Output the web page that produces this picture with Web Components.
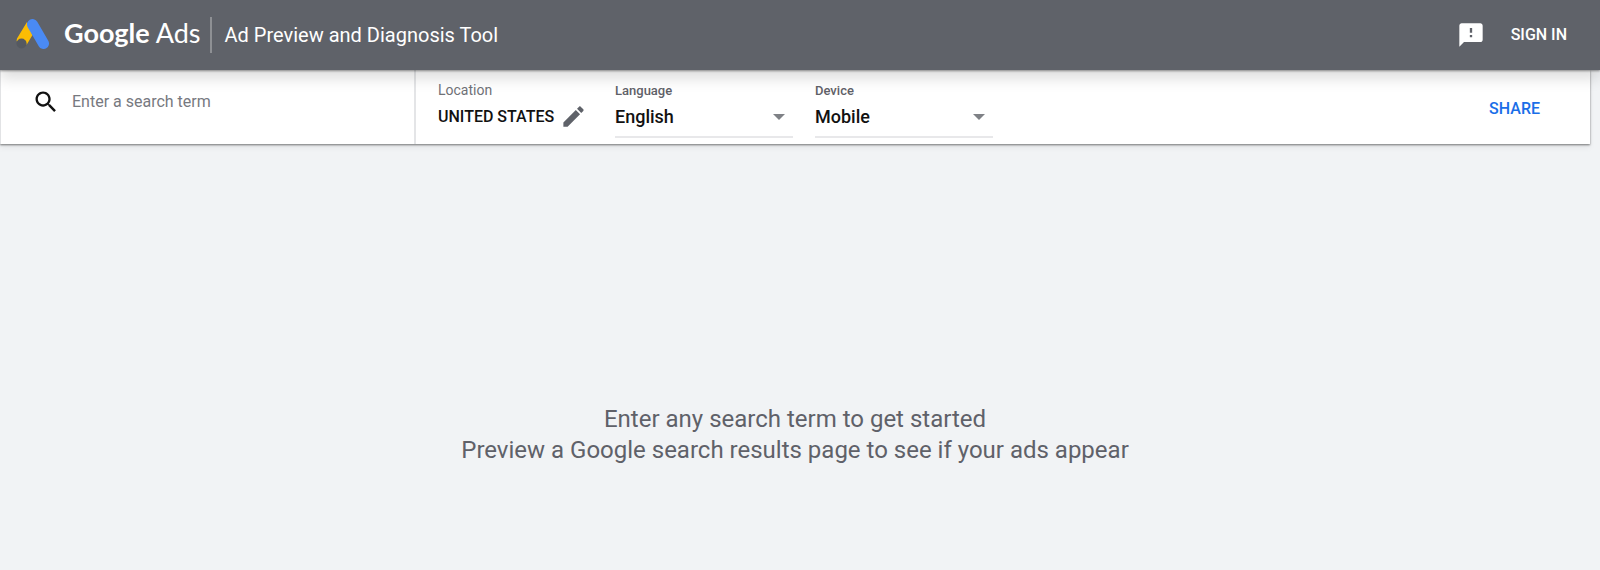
<!DOCTYPE html>
<html lang="en">
<head>
<meta charset="utf-8">
<meta name="viewport" content="width=device-width, initial-scale=1">
<title>Ad Preview and Diagnosis Tool</title>
<style>
  html { height: 100%; }
  body { margin: 0; min-height: 100%; display: flex; flex-direction: column; background: #f1f3f5; color: #5f6169; font-family: Roboto, "Liberation Sans", sans-serif; }
  preview-app { flex: 1; }
</style>
</head>
<body>
<preview-app></preview-app>
<script>
const define = (name, html, setup) => {
  const template = document.createElement('template');
  template.innerHTML = html;
  customElements.define(name, class extends HTMLElement {
    constructor() {
      super();
      this.attachShadow({ mode: 'open' }).append(template.content.cloneNode(true));
    }
    connectedCallback() { if (setup) setup(this, this.shadowRoot); }
  });
};

define('ads-logo', `
  <style>
    :host { display: flex; align-items: center; color: #fff; font: 400 27px/32px Lato, Roboto, sans-serif; gap: 14px; padding-bottom: 4px; }
    svg { display: block; width: 34px; height: 32px; }
    b { font-weight: 700; }
  </style>
  <svg viewBox="0 0 34 32" aria-hidden="true">
    <path d="M11 5 1 21.500 Q0 24 1.500 25 Q5 20.500 10 24 L10.500 28 16.500 18 Z" fill="#fbbc04"/>
    <circle cx="5.500" cy="26.500" r="5" fill="#555960"/>
    <path d="M16.500 7.500 27.500 26.500" stroke="#4a8af4" stroke-width="11" stroke-linecap="round"/>
  </svg>
  <span><b>Google</b> Ads</span>`);

define('app-header', `
  <style>
    :host { display: flex; align-items: center; box-sizing: border-box; height: 70px; padding: 0 33px 0 16px; background: #5f6269; color: #fff; position: relative; z-index: 2; box-shadow: 0 1px 2px rgba(0,0,0,.4), 0 8px 14px rgba(0,0,0,.14); }
    h1 { margin: 0 auto 0 9px; padding-left: 13px; border-left: 2px solid #8e9094; font: 400 20px/36px Roboto, sans-serif; }
    button { border: 0; padding: 0; background: none; color: inherit; font: 500 16px/24px Roboto, sans-serif; cursor: pointer; }
    svg { display: block; width: 28px; height: 28px; }
    .feedback { margin-right: 26px; }
  </style>
  <ads-logo></ads-logo>
  <h1>Ad Preview and Diagnosis Tool</h1>
  <button class="feedback" aria-label="Send feedback"><svg viewBox="0 0 24 24" fill="#fff" aria-hidden="true"><path d="M20 2H4c-1.100 0-1.990.9-1.990 2L2 22l4-4h14c1.100 0 2-.9 2-2V4c0-1.100-.9-2-2-2zm-7 12h-2v-2h2v2zm0-4h-2V6h2v4z"/></svg></button>
  <button>SIGN IN</button>`);

define('search-box', `
  <style>
    :host { display: flex; align-items: center; gap: 12px; box-sizing: border-box; padding: 0 20px 10px 31px; }
    label { display: block; }
    svg { display: block; width: 28px; height: 28px; }
    input { flex: 1; min-width: 0; border: 0; padding: 0; outline: 0; background: none; color: #111; font: 400 16px/24px Roboto, sans-serif; }
    input::placeholder { color: #77797f; opacity: 1; }
  </style>
  <label for="term" aria-label="Search term"><svg viewBox="0 0 24 24" fill="#111" aria-hidden="true"><path d="M15.500 14h-.79l-.28-.27C15.410 12.590 16 11.110 16 9.500 16 5.910 13.090 3 9.500 3S3 5.910 3 9.500 5.910 16 9.500 16c1.610 0 3.090-.59 4.230-1.570l.27.28v.79l5 4.990L20.490 19l-4.990-5zm-6 0C7.010 14 5 11.990 5 9.500S7.010 5 9.500 5 14 7.010 14 9.500 11.990 14 9.500 14z"/></svg></label>
  <input id="term" type="text" placeholder="Enter a search term">`);

define('location-field', `
  <style>
    :host { display: block; }
    div { font-size: 14px; line-height: 18px; color: #6f7177; }
    button { display: flex; align-items: center; gap: 6px; height: 36px; border: 0; padding: 0; background: none; color: #111; font: 500 16px/24px Roboto, sans-serif; cursor: pointer; white-space: nowrap; }
    svg { display: block; width: 27px; height: 27px; margin-bottom: 2px; }
  </style>
  <div id="label">Location</div>
  <button aria-describedby="label"><slot></slot><svg viewBox="0 0 24 24" fill="#5f6269" aria-hidden="true"><path d="M3 17.250V21h3.750L17.810 9.940l-3.750-3.750L3 17.250zM20.710 7.040c.39-.39.39-1.020 0-1.410l-2.340-2.340c-.39-.39-1.020-.39-1.410 0l-1.830 1.830 3.750 3.750 1.830-1.830z"/></svg></button>`);

define('select-field', `
  <style>
    :host { display: block; width: 178px; }
    label { display: block; font-size: 13px; font-weight: 500; line-height: 20px; color: #5f6168; }
    div { display: grid; align-items: center; height: 32px; padding-bottom: 3px; border-bottom: 2px solid #e8e8ea; }
    select, svg { grid-area: 1 / 1; }
    select { appearance: none; width: 100%; border: 0; padding: 0; background: none; color: #111; font: 500 18px/28px Roboto, sans-serif; }
    svg { justify-self: end; width: 12px; height: 6px; margin-right: 8px; pointer-events: none; }
  </style>
  <label for="choice"></label>
  <div><select id="choice"></select><svg viewBox="0 0 12 6" fill="#7f8186" aria-hidden="true"><path d="M0 0h12L6 6z"/></svg></div>`,
  (host, root) => {
    root.querySelector('label').textContent = host.getAttribute('label');
    root.querySelector('select').replaceChildren(...host.getAttribute('options').split(',').map(t => new Option(t)));
  });

define('preview-toolbar', `
  <style>
    :host { display: flex; box-sizing: border-box; min-height: 74px; margin-right: 10px; border-left: 1px solid #e2e3e5; background: #fff; box-shadow: 0 1px 2px rgba(0,0,0,.5), 0 4px 6px rgba(0,0,0,.05); }
    search-box { flex: 0 1 415px; border-right: 2px solid #e4e5e7; }
    .options { display: flex; gap: 22px; padding: 11px 0 0 22px; }
    location-field { width: 155px; }
    .share { align-self: center; margin: 4px 50px 0 auto; border: 0; padding: 0; background: none; color: #1a6ee8; font: 500 16px/24px Roboto, sans-serif; cursor: pointer; }
  </style>
  <search-box></search-box>
  <div class="options">
    <location-field>UNITED STATES</location-field>
    <select-field label="Language" options="English,Spanish,French"></select-field>
    <select-field label="Device" options="Mobile,Desktop,Tablet"></select-field>
  </div>
  <button class="share">SHARE</button>`);

define('empty-state', `
  <style>
    :host { display: block; margin-right: 10px; padding: 260px 16px 48px; text-align: center; font-size: 24px; line-height: 31px; color: #5f6169; }
    p { margin: 0; }
  </style>
  <p>Enter any search term to get started</p>
  <p>Preview a Google search results page to see if your ads appear</p>`);

define('preview-app', `
  <style>:host { display: block; } main { display: block; }</style>
  <app-header></app-header>
  <main>
    <preview-toolbar></preview-toolbar>
    <empty-state></empty-state>
  </main>`);
</script>
</body>
</html>
